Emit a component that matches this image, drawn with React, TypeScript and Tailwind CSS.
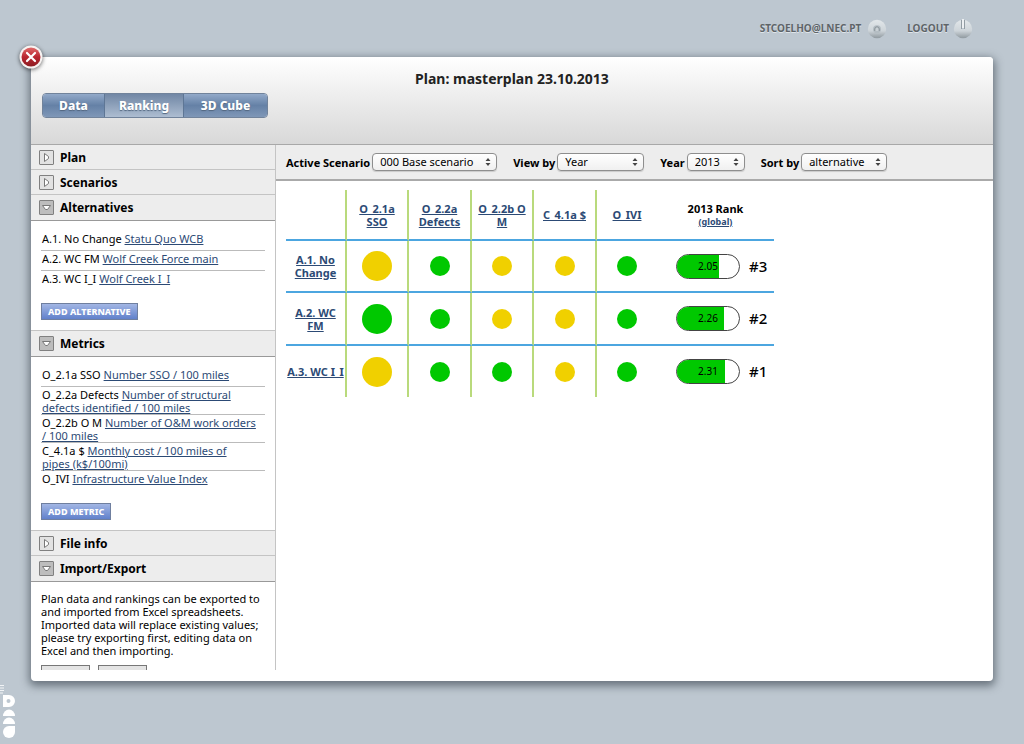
import clsx from "clsx";
import { type ReactNode, useState } from "react";

type SelectProps = {
  id: string;
  label: string;
  options: string[];
  width: string;
};

type SectionProps = {
  title: string;
  defaultOpen?: boolean;
  children?: ReactNode;
};

type Item = {
  code: string;
  name: string;
};

type Level = "good" | "fair";

const tabs = [
  { label: "Data", width: "w-[62px]" },
  { label: "Ranking", width: "w-[79px]" },
  { label: "3D Cube", width: "w-[83px]" },
];

const alternatives: Item[] = [
  { code: "A.1. No Change", name: "Statu Quo WCB" },
  { code: "A.2. WC FM", name: "Wolf Creek Force main" },
  { code: "A.3. WC I_I", name: "Wolf Creek I_I" },
];

const metrics: Item[] = [
  { code: "O_2.1a SSO", name: "Number SSO / 100 miles" },
  { code: "O_2.2a Defects", name: "Number of structural defects identified / 100 miles" },
  { code: "O_2.2b O M", name: "Number of O&M work orders / 100 miles" },
  { code: "C_4.1a $", name: "Monthly cost / 100 miles of pipes (k$/100mi)" },
  { code: "O_IVI", name: "Infrastructure Value Index" },
];

const columns = [
  { label: "O_2.1a SSO", width: "w-[62px]" },
  { label: "O_2.2a Defects", width: "w-[63px]" },
  { label: "O_2.2b O M", width: "w-[62px]" },
  { label: "C_4.1a $", width: "w-[63px]" },
  { label: "O_IVI", width: "w-[60px]" },
];

const rows: { label: string; levels: Level[]; score: number; rank: number; height: string }[] = [
  { label: "A.1. No Change", levels: ["fair", "good", "fair", "fair", "good"], score: 2.05, rank: 3, height: "h-[52px]" },
  { label: "A.2. WC FM", levels: ["good", "good", "fair", "fair", "good"], score: 2.26, rank: 2, height: "h-[53px]" },
  { label: "A.3. WC I_I", levels: ["fair", "good", "good", "fair", "good"], score: 2.31, rank: 1, height: "h-[51px]" },
];

const linkStyle = "text-[#2c4a75] underline";

function Select({ id, label, options, width }: SelectProps) {
  return (
    <div className="flex items-center gap-0.5">
      <label htmlFor={id} className="font-bold whitespace-nowrap">
        {label}
      </label>
      <div className={clsx("relative", width)}>
        <select
          id={id}
          className="block h-[18px] w-full appearance-none rounded border border-[#8e8e8e] bg-linear-to-b from-white to-[#f0f0f0] pr-4 pl-[7px] text-[11px] leading-4 shadow-[0_1px_1px_rgba(0,0,0,0.15)]"
        >
          {options.map((option) => (
            <option key={option}>{option}</option>
          ))}
        </select>
        <svg className="pointer-events-none absolute top-[5px] right-1.5" width="6" height="8" viewBox="0 0 6 8">
          <path d="M3 0 L5.5 3 H0.5 Z M3 8 L5.5 5 H0.5 Z" fill="#444" />
        </svg>
      </div>
    </div>
  );
}

function Section({ title, defaultOpen = false, children }: SectionProps) {
  const [open, setOpen] = useState(defaultOpen);

  return (
    <section>
      <h2>
        <button
          type="button"
          aria-expanded={open}
          onClick={() => setOpen(!open)}
          className={clsx(
            "flex w-full items-center gap-1.5 border-b bg-[#ededed] pl-2 text-left text-[12px] font-bold",
            open ? "h-[26px] border-[#999]" : "h-[25px] border-[#c4c4c4]",
          )}
        >
          <svg width="15" height="15" viewBox="0 0 15 15">
            <rect x="0.5" y="0.5" width="14" height="14" rx="0.5" fill={open ? "#bdbdbd" : "#e2e2e2"} stroke="#808080" />
            <path
              d={open ? "M3.5 5.5 H11.5 L8.5 9.5 H6.5 Z" : "M5.5 3.5 V11.5 L9.5 8.5 V6.5 Z"}
              fill="#fff"
              stroke="#777"
              strokeLinejoin="round"
            />
          </svg>
          {title}
        </button>
      </h2>
      {open && children}
    </section>
  );
}

function ItemList({ items, action }: { items: Item[]; action: string }) {
  return (
    <div className="border-b border-[#c4c4c4] px-2.5 pt-2.5 pb-2.5">
      <ul className="mb-3 divide-y divide-[#bbb]">
        {items.map((item) => (
          <li key={item.code} className="min-h-5 pt-px pr-[9px] pl-px">
            {item.code}{" "}
            <a href="#" className={linkStyle}>
              {item.name}
            </a>
          </li>
        ))}
      </ul>
      <button
        type="button"
        className="block h-[17px] border border-[#6f7f9f] bg-linear-to-b from-[#a3b6e4] to-[#6181cb] px-1.5 text-[9px] leading-[15px] font-extrabold text-white"
      >
        {action}
      </button>
    </div>
  );
}

function ScorePill({ score }: { score: number }) {
  return (
    <div className="relative h-[25px] w-16 overflow-hidden rounded-full border border-[#444] bg-white text-center text-[10px] leading-[23px]">
      <div className="absolute inset-y-0 left-0 bg-[#00c800]" style={{ width: `${Math.round((score / 3) * 100)}%` }} />
      <span className="relative">{score.toFixed(2)}</span>
    </div>
  );
}

function RankingTable() {
  const line = "border-b-2 border-b-[#4ca6e0]";
  const divider = "border-r-2 border-r-[#b9da7c]";

  return (
    <table className="mt-[9px] ml-2.5 w-[488px] table-fixed border-separate border-spacing-0 text-center">
      <colgroup>
        <col className="w-[61px]" />
        {columns.map((column) => (
          <col key={column.label} className={column.width} />
        ))}
        <col />
      </colgroup>
      <thead>
        <tr className="h-[51px]">
          <td className={clsx(line, divider)} />
          {columns.map((column, index) => (
            <th key={column.label} scope="col" className={clsx("px-1", line, index < 4 && divider)}>
              <a href="#" className={linkStyle}>
                {column.label}
              </a>
            </th>
          ))}
          <th scope="col" className={line}>
            2013 Rank
            <a href="#" className={clsx("block text-[9px]", linkStyle)}>
              (global)
            </a>
          </th>
        </tr>
      </thead>
      <tbody>
        {rows.map((row, rowIndex) => {
          const bottom = rowIndex < rows.length - 1 && line;
          return (
            <tr key={row.label} className={row.height}>
              <th scope="row" className={clsx(bottom, divider)}>
                <a href="#" className={linkStyle}>
                  {row.label}
                </a>
              </th>
              {row.levels.map((level, index) => (
                <td key={columns[index].label} className={clsx(bottom, index < 4 && divider)}>
                  <span
                    className={clsx(
                      "mx-auto block rounded-full",
                      index === 0 ? "size-[30px]" : "size-5",
                      level === "good" ? "bg-[#00c800]" : "bg-[#f0d000]",
                    )}
                  />
                </td>
              ))}
              <td className={clsx("pl-[19px]", bottom)}>
                <div className="flex items-center gap-[9px]">
                  <ScorePill score={row.score} />
                  <span className="text-[15px] font-medium">#{row.rank}</span>
                </div>
              </td>
            </tr>
          );
        })}
      </tbody>
    </table>
  );
}

function UserBar() {
  return (
    <nav className="flex h-[57px] shrink-0 items-center justify-end gap-5 pr-[51px] text-[10px] font-bold text-[#5e6468] [text-shadow:0_1px_0_#dfe5ea]">
      <a href="#" className="flex items-center gap-1.5">
        STCOELHO@LNEC.PT
        <svg width="20" height="20" viewBox="0 0 20 20">
          <defs>
            <linearGradient id="knob" x1="0" y1="0" x2="0" y2="1">
              <stop offset="0" stopColor="#e2e7ea" />
              <stop offset="0.6" stopColor="#cdd4d9" />
              <stop offset="1" stopColor="#8f999f" />
            </linearGradient>
          </defs>
          <circle cx="10" cy="10" r="9.2" fill="url(#knob)" />
          <circle cx="10" cy="10.2" r="4" fill="#b4bdc3" />
          <path d="M7.8 12 V10 A2.2 2.2 0 0 1 12.2 10 V12" fill="#c9d0d5" stroke="#858f95" />
        </svg>
      </a>
      <a href="#" className="flex items-center gap-1">
        LOGOUT
        <svg width="20" height="20" viewBox="0 0 20 20">
          <circle cx="10" cy="10" r="9.2" fill="url(#knob)" />
          <path d="M8 0 H12 V10 H8 Z" fill="#bdc7d0" />
          <path d="M8.5 1 V10 M11.5 1 V10" stroke="#929ca3" />
          <path d="M10 0 V9" stroke="#edf0f2" strokeWidth="2" />
        </svg>
      </a>
    </nav>
  );
}

function CloseButton() {
  return (
    <button type="button" aria-label="Close" className="absolute -top-3 -left-3">
      <svg className="drop-shadow-[0_1px_2px_rgba(0,0,0,0.6)]" width="24" height="24" viewBox="0 0 24 24">
        <defs>
          <linearGradient id="close" x1="0" y1="0" x2="0" y2="1">
            <stop offset="0" stopColor="#e06a6a" />
            <stop offset="0.5" stopColor="#b92730" />
            <stop offset="1" stopColor="#8e1c22" />
          </linearGradient>
        </defs>
        <circle cx="12" cy="12" r="11.5" fill="#f7f3f2" />
        <circle cx="12" cy="12" r="9.5" fill="url(#close)" />
        <path d="M8 8 L16 16 M16 8 L8 16" stroke="#fff" strokeWidth="2.2" strokeLinecap="round" />
      </svg>
    </button>
  );
}

function CornerLogo() {
  return (
    <svg className="absolute bottom-1 left-0" width="16" height="56" viewBox="0 0 16 56" fill="#fff">
      <path d="M0 1.5 H4 M0 4 H4 M0 6.5 H4 M0 9 H3" stroke="#fff" opacity="0.8" />
      <path fillRule="evenodd" d="M3 11 H9 A6 6 0 0 1 9 23 H3 Z M8.5 15 A2 2 0 1 0 8.5 19 A2 2 0 1 0 8.5 15 Z" />
      <path d="M3 32 A6 6.5 0 0 1 15 32 Z" />
      <path d="M3 40 A6 6.5 0 0 1 15 40 Z" />
      <path d="M15 42 V48 A6 6 0 1 1 9 42 Z" />
    </svg>
  );
}

export default function App() {
  const [activeTab, setActiveTab] = useState("Ranking");

  return (
    <div className="relative flex h-screen flex-col overflow-hidden bg-[#bdc7d0] font-['Lucida_Grande','Noto_Sans',sans-serif] text-[11px] leading-[13px] text-black">
      <UserBar />
      <main className="relative mr-[31px] mb-[63px] ml-[31px] flex min-h-0 flex-1 flex-col rounded bg-white pb-[11px] shadow-[0_3px_8px_2px_rgba(50,60,70,0.6)]">
        <CloseButton />
        <header className="h-[88px] shrink-0 rounded-t border-b border-[#a8a8a8] bg-linear-to-b from-white to-[#d8d8d8] px-[11px] pt-3.5">
          <h1 className="text-center text-[14px] leading-4 font-bold text-[#222]">Plan: masterplan 23.10.2013</h1>
          <div className="mt-1.5 flex h-[25px] w-fit divide-x divide-[#5e7695] overflow-hidden rounded border border-[#71839b]">
            {tabs.map((tab) => (
              <button
                key={tab.label}
                type="button"
                onClick={() => setActiveTab(tab.label)}
                className={clsx(
                  "text-[12px] font-extrabold text-white [text-shadow:0_1px_1px_#52667f]",
                  tab.width,
                  tab.label === activeTab
                    ? "bg-linear-to-b from-[#7187a5] to-[#adbdd1]"
                    : "bg-linear-to-b from-[#92a9c9] via-[#6581a6] to-[#7f97b7]",
                )}
              >
                {tab.label}
              </button>
            ))}
          </div>
        </header>
        <div className="flex min-h-0 flex-1">
          <aside className="w-[245px] shrink-0 overflow-hidden border-r border-[#c4c4c4]">
            <Section title="Plan" />
            <Section title="Scenarios" />
            <Section title="Alternatives" defaultOpen>
              <ItemList items={alternatives} action="ADD ALTERNATIVE" />
            </Section>
            <Section title="Metrics" defaultOpen>
              <ItemList items={metrics} action="ADD METRIC" />
            </Section>
            <Section title="File info" />
            <Section title="Import/Export" defaultOpen>
              <div className="px-2.5 pt-2.5">
                <p>
                  Plan data and rankings can be exported to and imported from Excel spreadsheets. Imported data will
                  replace existing values; please try exporting first, editing data on Excel and then importing.
                </p>
                <div className="mt-2 flex gap-2">
                  <button type="button" aria-label="Export" className="h-[17px] w-[49px] border border-[#777] bg-[#e4e4e4]" />
                  <button type="button" aria-label="Import" className="h-[17px] w-[49px] border border-[#777] bg-[#e4e4e4]" />
                </div>
              </div>
            </Section>
          </aside>
          <div className="min-w-0 flex-1">
            <form className="flex h-9 items-center gap-4 border-b-2 border-[#aaa] bg-[#ededed] pl-2.5">
              <Select id="scenario" label="Active Scenario" options={["000 Base scenario"]} width="w-[125px]" />
              <Select id="view" label="View by" options={["Year"]} width="w-[87px]" />
              <Select id="year" label="Year" options={["2013"]} width="w-[58px]" />
              <Select id="sort" label="Sort by" options={["alternative"]} width="w-[86px]" />
            </form>
            <RankingTable />
          </div>
        </div>
      </main>
      <CornerLogo />
    </div>
  );
}
